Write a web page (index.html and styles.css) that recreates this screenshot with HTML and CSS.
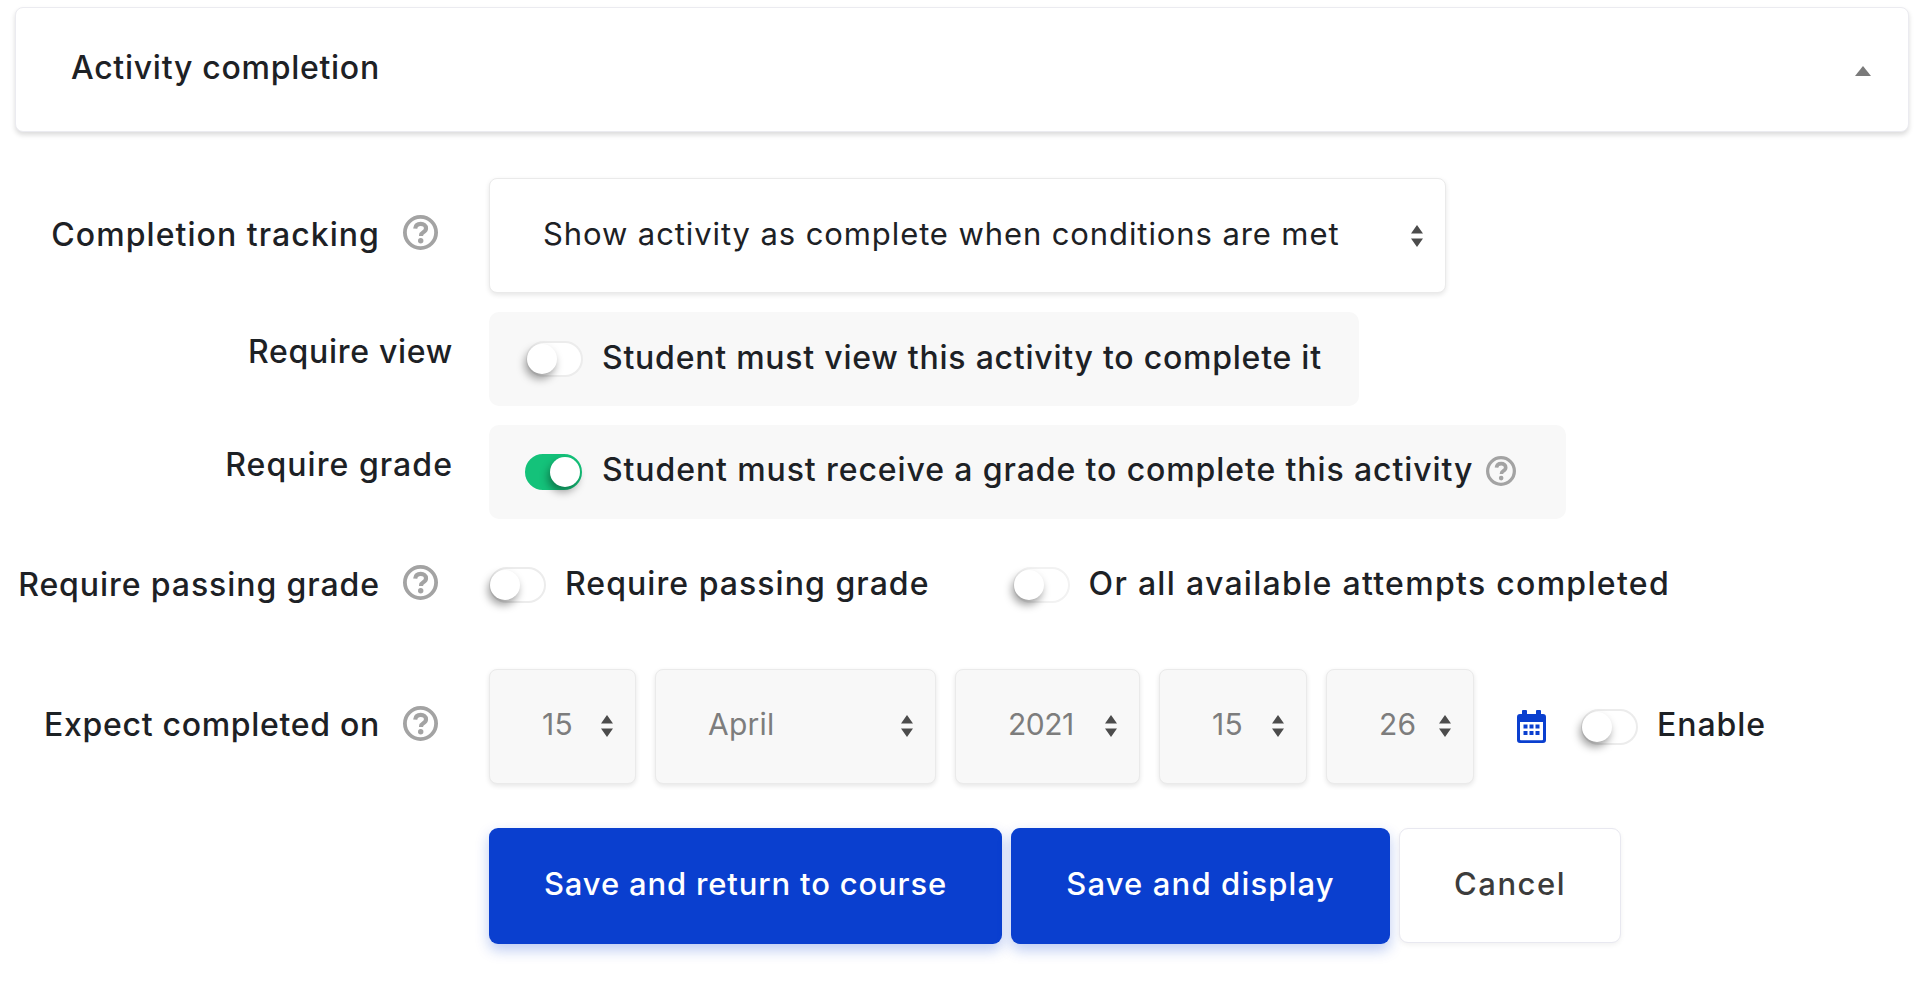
FILE: index.html
```html
<!DOCTYPE html>
<html lang="en">
<head>
<meta charset="utf-8">
<title>Activity completion</title>
<link rel="stylesheet" href="styles.css">
</head>
<body>
<svg class="defs" width="0" height="0" aria-hidden="true">
  <symbol id="help" viewBox="0 0 35 35">
    <circle cx="17.5" cy="17.5" r="15.6" fill="none" stroke="currentColor" stroke-width="3.8"/>
    <path d="M12.2 13.6c.3-3 2.5-4.7 5.5-4.700 3.100 0 5.300 1.800 5.300 4.400 0 2-1 3-2.700 4-1.300.8-2.200 1.500-2.200 3v.8" fill="none" stroke="currentColor" stroke-width="4.200"/>
    <circle cx="17.700" cy="25.800" r="2.700" fill="currentColor"/>
  </symbol>
  <symbol id="arrows" viewBox="0 0 14 24">
    <path d="M7 1l6 8.400H1zM7 23l-6-8.400h12z" fill="currentColor"/>
  </symbol>
</svg>

<section class="card">
  <h2 class="card-title">Activity completion</h2>
  <svg class="caret" viewBox="0 0 16 10" aria-hidden="true"><path d="M8 0l8 10H0z" fill="currentColor"/></svg>
</section>

<div class="form-row row-tracking">
  <div class="label-col">
    <span class="label ls-wide">Completion tracking</span>
    <svg class="help help-label"><use href="#help"/></svg>
  </div>
  <div class="select select-wide">
    <span class="select-text">Show activity as complete when conditions are met</span>
    <svg class="arrows"><use href="#arrows"/></svg>
  </div>
</div>

<div class="form-row row-static">
  <div class="label-col label-top">
    <span class="label ls-tight">Require view</span>
  </div>
  <div class="static-box">
    <span class="toggle"><span class="knob"></span></span>
    <span class="toggle-text ls-view">Student must view this activity to complete it</span>
  </div>
</div>

<div class="form-row row-static">
  <div class="label-col label-top">
    <span class="label ls-wide">Require grade</span>
  </div>
  <div class="static-box static-help">
    <span class="toggle toggle-on"><span class="knob"></span></span>
    <span class="toggle-text ls-grade">Student must receive a grade to complete this activity</span>
    <svg class="help help-inline"><use href="#help"/></svg>
  </div>
</div>

<div class="form-row row-passing">
  <div class="label-col">
    <span class="label">Require passing grade</span>
    <svg class="help help-label"><use href="#help"/></svg>
  </div>
  <div class="inline-group">
    <span class="toggle"><span class="knob"></span></span>
    <span class="toggle-text text-first ls-wide">Require passing grade</span>
    <span class="toggle toggle-faint"><span class="knob"></span></span>
    <span class="toggle-text ls-widest">Or all available attempts completed</span>
  </div>
</div>

<div class="form-row row-date">
  <div class="label-col">
    <span class="label ls-tight label-raised">Expect completed on</span>
    <svg class="help help-label"><use href="#help"/></svg>
  </div>
  <div class="date-group">
    <div class="select select-date d-day"><span class="select-text">15</span><svg class="arrows"><use href="#arrows"/></svg></div>
    <div class="select select-date d-month"><span class="select-text">April</span><svg class="arrows"><use href="#arrows"/></svg></div>
    <div class="select select-date d-year"><span class="select-text">2021</span><svg class="arrows"><use href="#arrows"/></svg></div>
    <div class="select select-date d-hour"><span class="select-text">15</span><svg class="arrows"><use href="#arrows"/></svg></div>
    <div class="select select-date d-min"><span class="select-text">26</span><svg class="arrows"><use href="#arrows"/></svg></div>
    <svg class="calendar" viewBox="0 0 29 33" aria-hidden="true">
      <path fill="currentColor" d="M6 0h3a1 1 0 0 1 1 1v3h9V1a1 1 0 0 1 1-1h3a1 1 0 0 1 1 1v3h2a3 3 0 0 1 3 3v23a3 3 0 0 1-3 3H3a3 3 0 0 1-3-3V7a3 3 0 0 1 3-3h2V1a1 1 0 0 1 1-1zM3 12v17.500a.8.8 0 0 0 .8.8h21.400a.8.8 0 0 0 .8-.8V12z"/>
      <path fill="currentColor" d="M6.500 14.500h4v4h-4zM12.500 14.500h4v4h-4zM18.500 14.500h4v4h-4zM6.500 21h4v4h-4zM12.500 21h4v4h-4zM18.500 21h4v4h-4z"/>
    </svg>
    <span class="toggle"><span class="knob"></span></span>
    <span class="toggle-text">Enable</span>
  </div>
</div>

<div class="form-row row-buttons">
  <div class="label-col"></div>
  <div class="buttons">
    <button class="btn btn-primary btn-return" type="button">Save and return to course</button>
    <button class="btn btn-primary btn-display" type="button">Save and display</button>
    <button class="btn btn-cancel" type="button">Cancel</button>
  </div>
</div>
</body>
</html>
```
FILE: styles.css
```css
* { box-sizing: border-box; }

html, body {
  margin: 0;
  background: #fff;
}

body {
  height: 984px;
  overflow: hidden;
  padding-top: 7px;
  font-family: Inter, "Liberation Sans", sans-serif;
  font-size: 32px;
  font-weight: 500;
  letter-spacing: 0.92px;
  color: #1d2125;
}

.defs { position: absolute; }

.card {
  display: flex;
  align-items: center;
  justify-content: space-between;
  height: 125px;
  margin: 0 7px 0 15px;
  padding: 0 37px 0 55px;
  background: #fff;
  border: 1px solid #ebebf0;
  border-radius: 8px;
  box-shadow: 0 3px 5px rgba(0, 0, 0, 0.14);
}

.card-title {
  margin: 0 0 5px;
  font-size: 32px;
  font-weight: 500;
  letter-spacing: 0.72px;
}

.caret {
  width: 16px;
  height: 10px;
  margin-top: 2px;
  color: #7a7a7a;
}

.form-row {
  display: flex;
}

.label-col {
  flex: 0 0 489px;
  display: flex;
  align-items: center;
  justify-content: flex-end;
  padding-right: 51px;
}

.label { margin-bottom: 2px; }
.label-raised { margin-bottom: 4px; }

.ls-tight { letter-spacing: 0.7px; }
.ls-view { letter-spacing: 0.76px; }
.ls-grade { letter-spacing: 0.9px; }
.ls-wide { letter-spacing: 1.05px; }
.ls-widest { letter-spacing: 1.3px; }

.label-top {
  align-items: flex-start;
  padding-right: 36px;
}

.label-top .label {
  margin-top: 20px;
}

.help {
  flex: none;
  color: #a3a3a3;
}

.help-label {
  width: 35px;
  height: 35px;
  margin: -6px 0 0 23px;
}

.help-inline {
  width: 30px;
  height: 30px;
  margin: 0 13px 3px 13px;
}

.row-tracking { margin-top: 46px; height: 115px; }
.row-static { margin-top: 19px; height: 94px; }
.row-passing { margin-top: 48px; height: 36px; }
.row-date { margin-top: 66px; height: 115px; }
.row-buttons { margin-top: 44px; height: 116px; }

.select {
  display: flex;
  align-items: center;
  justify-content: space-between;
  height: 115px;
  border: 1px solid #eaeaea;
  border-radius: 8px;
  background: #fff;
  box-shadow: 0 2px 5px rgba(0, 0, 0, 0.1);
}

.select-wide {
  width: 957px;
  padding: 0 21px 0 53px;
  font-size: 31px;
  font-weight: 400;
  letter-spacing: 0.9px;
}

.arrows {
  flex: none;
  width: 14px;
  height: 24px;
  color: #4c4c4c;
}

.select-text {
  margin-bottom: 4px;
}

.static-box {
  display: flex;
  align-items: center;
  height: 94px;
  padding: 0 37px;
  background: #f8f8f8;
  border-radius: 10px;
}

.toggle-text {
  margin: 0 0 4px 19px;
}

.static-help .toggle-text { margin-bottom: 6px; }

.toggle {
  flex: none;
  display: flex;
  align-items: center;
  width: 57px;
  height: 36px;
  padding: 0 2px;
  background: #fff;
  border: 2px solid #ececec;
  border-radius: 18px;
}

.toggle-on {
  justify-content: flex-end;
  margin-left: -1px;
  background: #14c27a;
  border-color: #14c27a;
}

.toggle-on + .toggle-text { margin-left: 20px; }

.toggle-faint {
  border-color: #f2f2f2;
}

.knob {
  width: 30px;
  height: 30px;
  margin-left: -3px;
  border-radius: 50%;
  background: #fff;
  box-shadow: -2px 5px 8px rgba(0, 0, 0, 0.38);
}

.toggle-on .knob {
  margin-left: 0;
  margin-right: -2px;
}

.inline-group {
  display: flex;
  align-items: center;
  height: 36px;
}

.inline-group .text-first {
  margin-right: 83px;
}

.date-group {
  display: flex;
  align-items: center;
  height: 115px;
}

.select-date {
  margin-right: 19px;
  padding: 0 21px 0 52px;
  background: #f8f8f8;
  color: #7d7d7d;
  font-size: 30px;
  font-weight: 400;
  letter-spacing: 0.2px;
}

.select-date .select-text { margin-bottom: 6px; }
.select-date .arrows { margin-bottom: 2px; }

.d-day { width: 147px; }
.d-month { width: 281px; }
.d-year { width: 185px; letter-spacing: -0.5px; }
.d-hour { width: 148px; }
.d-min { width: 148px; margin-right: 43px; }

.calendar {
  flex: none;
  width: 29px;
  height: 33px;
  margin: -1px 35px 0 0;
  color: #0a3fcf;
}

.date-group .toggle-text {
  margin-left: 19px;
}

.buttons {
  display: flex;
  align-items: flex-start;
}

.btn {
  height: 116px;
  padding: 0 0 5px;
  border-radius: 9px;
  font: inherit;
  font-size: 31px;
  cursor: pointer;
}

.btn-primary {
  border: 0;
  background: #0a3fcf;
  color: #fff;
  box-shadow: 0 6px 14px rgba(10, 63, 207, 0.28);
}

.btn-return { width: 513px; margin-right: 9px; letter-spacing: 0.84px; }
.btn-display { width: 379px; margin-right: 9px; letter-spacing: 1.15px; }

.btn-cancel {
  width: 222px;
  height: 115px;
  letter-spacing: 1.5px;
  background: #fff;
  color: #3c3c3c;
  border: 1px solid #e8e8f0;
  box-shadow: 0 2px 5px rgba(0, 0, 0, 0.06);
}
```
